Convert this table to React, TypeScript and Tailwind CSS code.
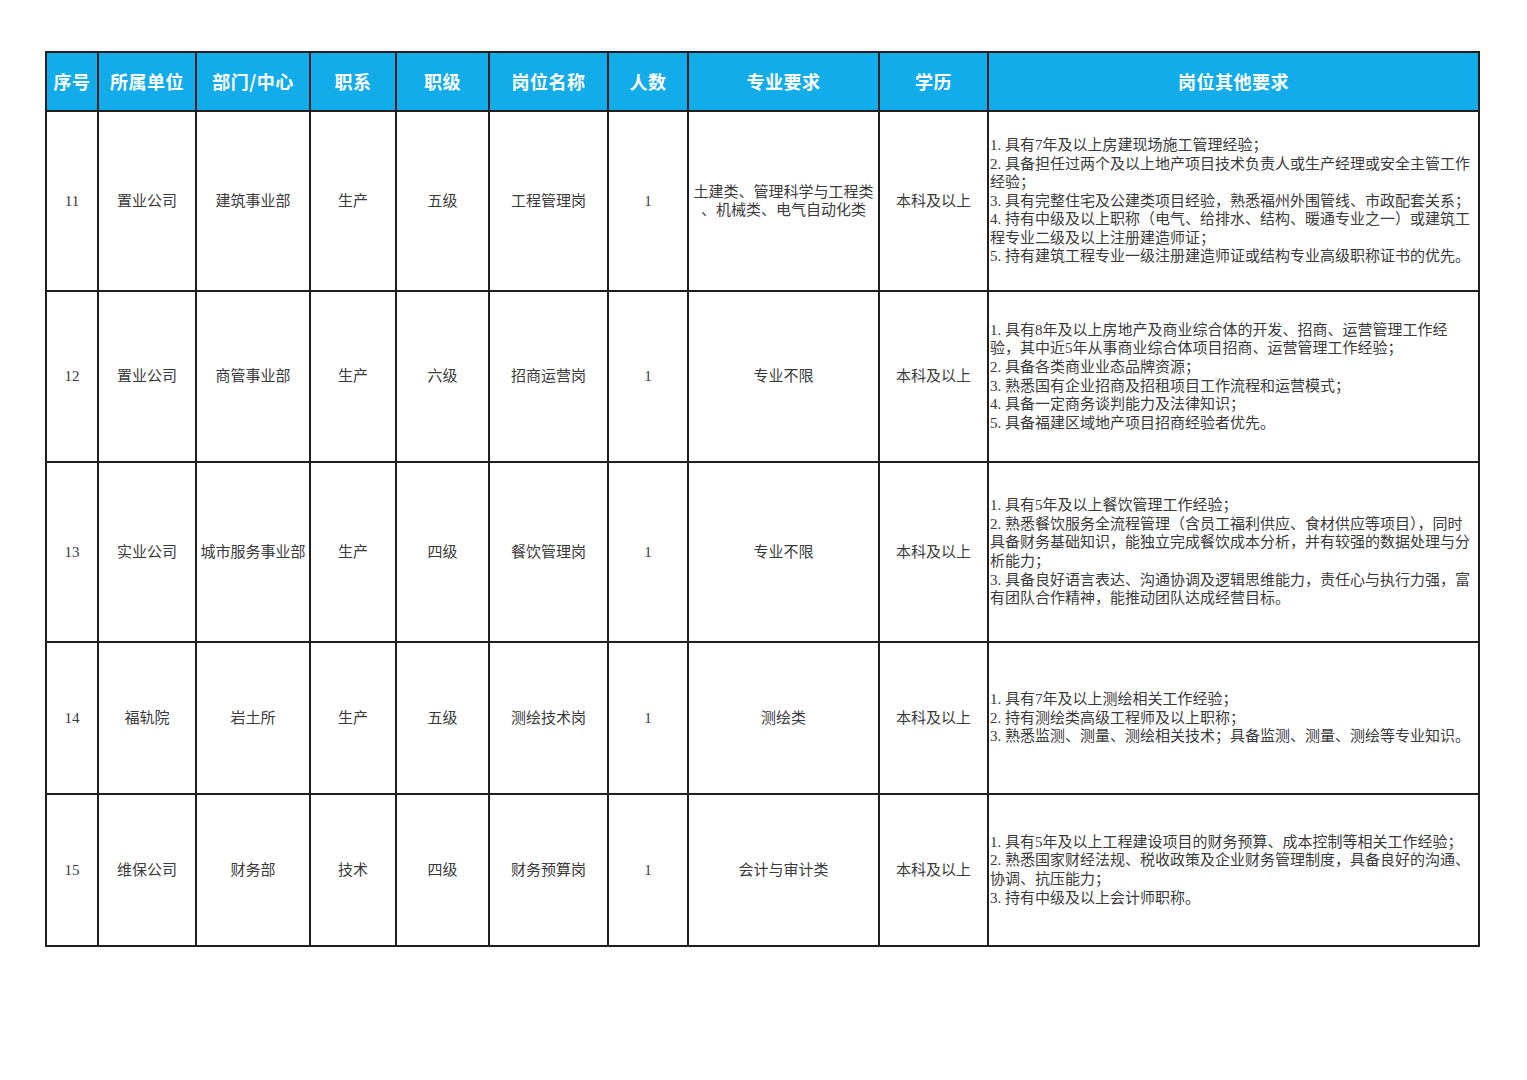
import React from "react";

const headers = ["序号", "所属单位", "部门/中心", "职系", "职级", "岗位名称", "人数", "专业要求", "学历", "岗位其他要求"];
const widths = [52, 98, 114, 86, 93, 119, 80, 191, 109, 491];

type Row = {
  no: string;
  unit: string;
  dept: string;
  series: string;
  level: string;
  post: string;
  num: string;
  major: string[];
  edu: string;
  req: string[];
  h: string;
};

const rows: Row[] = [
  {
    no: "11",
    unit: "置业公司",
    dept: "建筑事业部",
    series: "生产",
    level: "五级",
    post: "工程管理岗",
    num: "1",
    major: ["土建类、管理科学与工程类", "、机械类、电气自动化类"],
    edu: "本科及以上",
    req: [
      "1. 具有7年及以上房建现场施工管理经验；",
      "2. 具备担任过两个及以上地产项目技术负责人或生产经理或安全主管工作",
      "经验；",
      "3. 具有完整住宅及公建类项目经验，熟悉福州外围管线、市政配套关系；",
      "4. 持有中级及以上职称（电气、给排水、结构、暖通专业之一）或建筑工",
      "程专业二级及以上注册建造师证；",
      "5. 持有建筑工程专业一级注册建造师证或结构专业高级职称证书的优先。",
    ],
    h: "h-[180px]",
  },
  {
    no: "12",
    unit: "置业公司",
    dept: "商管事业部",
    series: "生产",
    level: "六级",
    post: "招商运营岗",
    num: "1",
    major: ["专业不限"],
    edu: "本科及以上",
    req: [
      "1. 具有8年及以上房地产及商业综合体的开发、招商、运营管理工作经",
      "验，其中近5年从事商业综合体项目招商、运营管理工作经验；",
      "2. 具备各类商业业态品牌资源；",
      "3. 熟悉国有企业招商及招租项目工作流程和运营模式；",
      "4. 具备一定商务谈判能力及法律知识；",
      "5. 具备福建区域地产项目招商经验者优先。",
    ],
    h: "h-[171px]",
  },
  {
    no: "13",
    unit: "实业公司",
    dept: "城市服务事业部",
    series: "生产",
    level: "四级",
    post: "餐饮管理岗",
    num: "1",
    major: ["专业不限"],
    edu: "本科及以上",
    req: [
      "1. 具有5年及以上餐饮管理工作经验；",
      "2. 熟悉餐饮服务全流程管理（含员工福利供应、食材供应等项目），同时",
      "具备财务基础知识，能独立完成餐饮成本分析，并有较强的数据处理与分",
      "析能力；",
      "3. 具备良好语言表达、沟通协调及逻辑思维能力，责任心与执行力强，富",
      "有团队合作精神，能推动团队达成经营目标。",
    ],
    h: "h-[180px]",
  },
  {
    no: "14",
    unit: "福轨院",
    dept: "岩土所",
    series: "生产",
    level: "五级",
    post: "测绘技术岗",
    num: "1",
    major: ["测绘类"],
    edu: "本科及以上",
    req: [
      "1. 具有7年及以上测绘相关工作经验；",
      "2. 持有测绘类高级工程师及以上职称；",
      "3. 熟悉监测、测量、测绘相关技术；具备监测、测量、测绘等专业知识。",
    ],
    h: "h-[152px]",
  },
  {
    no: "15",
    unit: "维保公司",
    dept: "财务部",
    series: "技术",
    level: "四级",
    post: "财务预算岗",
    num: "1",
    major: ["会计与审计类"],
    edu: "本科及以上",
    req: [
      "1. 具有5年及以上工程建设项目的财务预算、成本控制等相关工作经验；",
      "2. 熟悉国家财经法规、税收政策及企业财务管理制度，具备良好的沟通、",
      "协调、抗压能力；",
      "3. 持有中级及以上会计师职称。",
    ],
    h: "h-[152px]",
  },
];

const bodyFont = { fontFamily: '"Liberation Serif", "Noto Sans CJK SC", serif' };

export default function App() {
  return (
    <div lang="zh-CN" className="min-h-[1080px] w-[1527px] bg-white pt-[51px] pl-[45px]">
      <table
        className="w-[1435px] table-fixed border-collapse border-2 border-[#1f1f1f]"
        style={bodyFont}
      >
        <colgroup>
          {widths.map((w, i) => (
            <col key={i} style={{ width: w }} />
          ))}
        </colgroup>
        <thead>
          <tr className="h-[59px] bg-[#12acea]">
            {headers.map((h) => (
              <th
                key={h}
                className="border-2 border-[#1f1f1f] p-0 text-center align-middle text-[18px] font-bold tracking-[0.5px] text-white"
                style={{ fontFamily: '"Noto Sans CJK SC", sans-serif' }}
              >
                {h}
              </th>
            ))}
          </tr>
        </thead>
        <tbody>
          {rows.map((r) => {
            const cells = [r.no, r.unit, r.dept, r.series, r.level, r.post, r.num];
            return (
              <tr key={r.no} className={r.h}>
                {cells.map((c, i) => (
                  <td
                    key={i}
                    className="border-2 border-[#1f1f1f] p-0 text-center align-middle text-[15px] leading-[18.5px] text-[#3a3a3a]"
                  >
                    {c}
                  </td>
                ))}
                <td className="border-2 border-[#1f1f1f] p-0 text-center align-middle text-[15px] leading-[18.5px] text-[#3a3a3a]">
                  {r.major.map((m, i) => (
                    <div key={i} className="whitespace-nowrap">
                      {m}
                    </div>
                  ))}
                </td>
                <td className="border-2 border-[#1f1f1f] p-0 text-center align-middle text-[15px] leading-[18.5px] text-[#3a3a3a]">
                  {r.edu}
                </td>
                <td className="border-2 border-[#1f1f1f] py-0 pl-[1px] pr-0 text-left align-middle text-[15px] leading-[18.6px] text-[#3a3a3a]">
                  {r.req.map((l, i) => (
                    <div key={i} className="whitespace-nowrap">
                      {l}
                    </div>
                  ))}
                </td>
              </tr>
            );
          })}
        </tbody>
      </table>
    </div>
  );
}
